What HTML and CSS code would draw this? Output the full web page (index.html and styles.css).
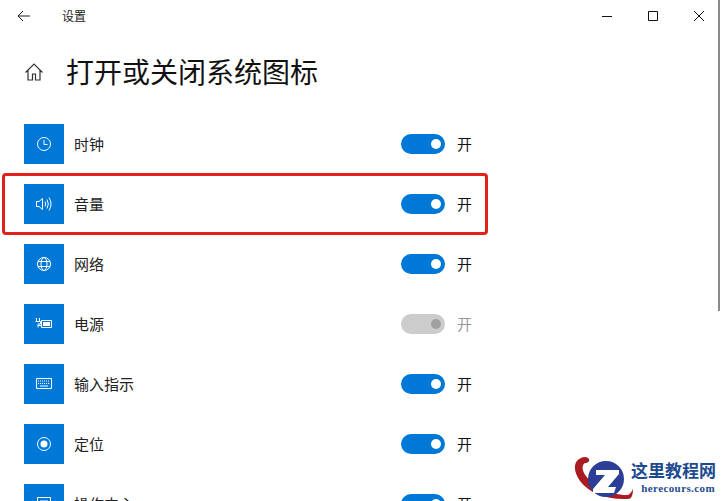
FILE: index.html
```html
<!DOCTYPE html>
<html lang="zh-CN">

<head>
    <meta charset="UTF-8">
    <title>设置</title>
    <link rel="stylesheet" href="styles.css">
</head>

<body>
    <div class="window">
        <header class="titlebar">
            <svg class="back" width="16" height="16" viewBox="0 0 16 16">
                <path d="M14 8H2M7 3 2 8l5 5" />
            </svg>
            <span class="app-name">设置</span>
            <div class="controls">
                <svg width="10" height="10" viewBox="0 0 10 10"><path d="M0 5.500h10" /></svg>
                <svg width="10" height="10" viewBox="0 0 10 10"><path d="M.5.500h9v9h-9z" /></svg>
                <svg width="10" height="10" viewBox="0 0 10 10"><path d="m0 0 10 10M10 0 0 10" /></svg>
            </div>
        </header>

        <div class="heading">
            <svg class="home" width="20" height="20" viewBox="0 0 20 20">
                <path d="M1.500 10.500 10 2l8.500 8.500M4 8.500V18h4.500v-6h3v6H16V8.500" />
            </svg>
            <h1>打开或关闭系统图标</h1>
        </div>

        <ul class="list">
            <li class="row">
                <span class="tile">
                    <svg width="16" height="16" viewBox="0 0 16 16">
                        <circle cx="8" cy="8" r="6.500" /><path d="M8 4v4.500h3.500" />
                    </svg>
                </span>
                <span class="label">时钟</span>
                <span class="toggle"><i></i></span>
                <span class="state">开</span>
            </li>
            <li class="row">
                <span class="tile">
                    <svg width="18" height="16" viewBox="0 0 18 16">
                        <path d="M1.500 5.500h2.500L7.500 2.500v11L4 10.500H1.500zM10 5.500q1.500 2.500 0 5M12 3.500q2.700 4.500 0 9M14 1.500q4 6.500 0 13" />
                    </svg>
                </span>
                <span class="label">音量</span>
                <span class="toggle"><i></i></span>
                <span class="state">开</span>
            </li>
            <li class="row">
                <span class="tile">
                    <svg width="16" height="16" viewBox="0 0 16 16">
                        <circle cx="8" cy="8" r="6.500" />
                        <ellipse cx="8" cy="8" rx="3" ry="6.500" />
                        <path d="M2 5.500h12M2 10.500h12" />
                    </svg>
                </span>
                <span class="label">网络</span>
                <span class="toggle"><i></i></span>
                <span class="state">开</span>
            </li>
            <li class="row">
                <span class="tile">
                    <svg width="18" height="16" viewBox="0 0 18 16">
                        <path d="M6.500 4.500h10v7h-10z" />
                        <path class="solid" d="M8 6h7v4H8z" />
                        <path d="M1.500 2v3M4.500 2v3M.5 5.500h5V8H3v3.500M3 9.500h3.500" />
                    </svg>
                </span>
                <span class="label">电源</span>
                <span class="toggle off"><i></i></span>
                <span class="state dim">开</span>
            </li>
            <li class="row">
                <span class="tile">
                    <svg width="16" height="12" viewBox="0 0 16 12">
                        <path d="M.5.500h15v10H.5z" />
                        <path class="keys" d="M2 3h12M2 5.500h12" />
                        <path d="M4 8h8" />
                    </svg>
                </span>
                <span class="label">输入指示</span>
                <span class="toggle"><i></i></span>
                <span class="state">开</span>
            </li>
            <li class="row">
                <span class="tile">
                    <svg width="16" height="16" viewBox="0 0 16 16">
                        <circle cx="8" cy="8" r="6.500" />
                        <circle class="solid" cx="8" cy="8" r="3.500" />
                    </svg>
                </span>
                <span class="label">定位</span>
                <span class="toggle"><i></i></span>
                <span class="state">开</span>
            </li>
            <li class="row">
                <span class="tile">
                    <svg width="16" height="16" viewBox="0 0 16 16">
                        <path d="M1.500 1.500h13v13h-13zM4 5h8" />
                    </svg>
                </span>
                <span class="label">操作中心</span>
                <span class="toggle"><i></i></span>
                <span class="state">开</span>
            </li>
        </ul>

        <div class="scrollbar"></div>
        <div class="highlight"></div>

        <div class="watermark">
            <svg width="68" height="46" viewBox="0 0 68 46">
                <path class="swoosh" d="M8 3C0 6 0 16 7 26c9 12 26 19 48 18 3 0 5-3 5-10-2 4-4 6-6 6-18 0-36-10-43-22-2-5-2-8 1-10 3 0 5-2 4-4-1-2-5-3-8-1z" />
                <circle class="globe" cx="33" cy="24" r="18" />
                <path class="letter" d="M23 15h23v4L35 32h8l-2 6H20v-4l12-14h-9z" />
            </svg>
            <div class="brand">
                <span class="brand-cn">这里教程网</span>
                <span class="brand-en">herecours.com</span>
            </div>
        </div>
    </div>
</body>

</html>
```

FILE: styles.css
```css
html,
body {
    margin: 0;
    height: 100%;
    overflow: hidden;
    background-color: white;
}

.window {
    position: relative;
    width: 721px;
    height: 501px;
    overflow: hidden;
    font-family: "Noto Sans CJK SC", "Liberation Sans", sans-serif;
    color: black;
}

svg {
    fill: none;
    stroke: currentColor;
    stroke-width: 1;
}

.titlebar {
    display: flex;
    align-items: center;
    height: 32px;
    padding-left: 16px;
}

.back {
    color: #222;
}

.app-name {
    margin-left: 30px;
    margin-bottom: 2px;
    font-size: 12px;
    color: #222;
}

.controls {
    display: flex;
    gap: 36px;
    margin-left: auto;
    margin-right: 17px;
    color: #111;
}

.heading {
    display: flex;
    align-items: center;
    height: 40px;
    margin-top: 20px;
    padding-left: 24px;
}

.home {
    color: #333;
    stroke-width: 1.2;
}

.heading h1 {
    margin: 0 0 2px 22px;
    font-size: 28px;
    font-weight: 400;
    color: #111;
}

.list {
    list-style: none;
    margin: 32px 0 0;
    padding: 0 0 0 24px;
}

.row {
    display: flex;
    align-items: center;
    height: 40px;
    margin-bottom: 20px;
    font-size: 15px;
}

.tile {
    display: flex;
    align-items: center;
    justify-content: center;
    width: 40px;
    height: 40px;
    background-color: #0078d7;
    color: white;
}

.tile .solid {
    fill: white;
    stroke: none;
}

.tile .keys {
    stroke-dasharray: 1 1;
}

.label {
    width: 327px;
    margin-left: 10px;
    margin-bottom: 2px;
    color: #222;
}

.toggle {
    display: flex;
    align-items: center;
    justify-content: flex-end;
    width: 44px;
    height: 20px;
    padding-right: 4px;
    box-sizing: border-box;
    border-radius: 10px;
    background-color: #0078d7;
}

.toggle i {
    width: 10px;
    height: 10px;
    border-radius: 50%;
    background-color: white;
}

.toggle.off {
    background-color: #ccc;
}

.toggle.off i {
    background-color: #a0a0a0;
}

.state {
    margin-left: 12px;
    margin-bottom: 2px;
    color: #111;
}

.state.dim {
    color: #999;
}

.scrollbar {
    position: absolute;
    top: 0;
    right: 1px;
    width: 2px;
    height: 311px;
    background-color: #8a8a8a;
}

.highlight {
    position: absolute;
    left: 2px;
    top: 173px;
    width: 480px;
    height: 56px;
    border: 3px solid #e3211c;
    border-radius: 4px;
}

.watermark {
    position: absolute;
    left: 573px;
    bottom: 0;
    display: flex;
    align-items: flex-start;
}

.swoosh {
    fill: #a81c22;
    stroke: none;
}

.globe {
    fill: #2b3f96;
    stroke: none;
}

.letter {
    fill: white;
    stroke: none;
}

.brand {
    display: flex;
    flex-direction: column;
    align-items: flex-end;
    margin-left: -10px;
    margin-top: 5px;
    color: #1d4a8f;
    font-family: "Noto Sans CJK SC", serif;
}

.brand-cn {
    font-size: 17px;
    font-weight: 700;
    line-height: 20px;
}

.brand-en {
    font-family: "Liberation Serif", serif;
    font-size: 11px;
    font-weight: 700;
    line-height: 16px;
    letter-spacing: .4px;
    margin-right: 1px;
}
```
